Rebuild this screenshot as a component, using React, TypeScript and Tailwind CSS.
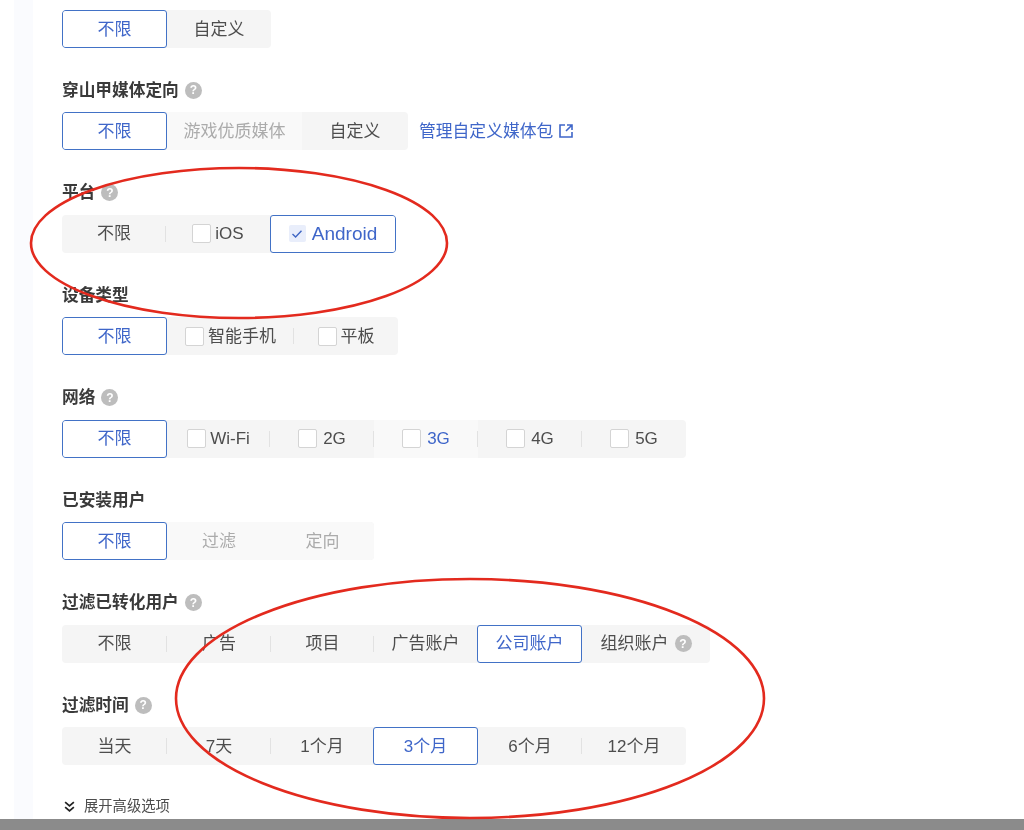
import React from "react";

type Item = {
  label: string;
  w: number;
  kind?: "selected" | "muted";
  check?: boolean;
  checked?: boolean;
  blue?: boolean;
  light?: boolean;
  divider?: boolean;
  help?: boolean;
  tight?: boolean;
  wide?: boolean;
};

function Help() {
  return (
    <span className="inline-flex h-[17px] w-[17px] items-center justify-center rounded-full bg-[#bdbdbd] text-[12px] font-bold leading-none text-white">
      ?
    </span>
  );
}

function Box({ checked }: { checked?: boolean }) {
  if (checked) {
    return (
      <span className="flex h-[17px] w-[17px] items-center justify-center rounded-[2px] bg-[#e9eefb]">
        <svg width="12" height="10" viewBox="0 0 12 10" fill="none" stroke="#3f66c4" strokeWidth="1.4">
          <path d="M1.5 5 L4.6 8 L10.5 1.8" />
        </svg>
      </span>
    );
  }
  return <span className="h-[19px] w-[19px] rounded-[2px] border border-[#d4d4d4] bg-white" />;
}

function Segment({ item }: { item: Item }) {
  const selected = item.kind === "selected";
  const tone = selected || item.blue ? "text-[#3f66c9]" : item.kind === "muted" ? "text-[#ababab]" : "text-[#4d4d4d]";
  const back = selected
    ? "bg-white border border-[#4272c6] rounded-[3px] z-10"
    : item.light
      ? "bg-[#f9f9f9]"
      : "";
  return (
    <div
      style={{ width: item.w }}
      className={`relative flex h-full shrink-0 items-center justify-center ${item.tight ? "gap-[4px]" : "gap-[6px]"} ${back} ${tone}`}
    >
      {item.check ? <Box checked={item.checked} /> : null}
      <span className={item.wide ? "text-[19px]" : ""}>{item.label}</span>
      {item.help ? <Help /> : null}
      {item.divider ? <span className="absolute right-0 top-[11px] h-[16px] w-px bg-[#e2e2e2]" /> : null}
    </div>
  );
}

function Group({ items }: { items: Item[] }) {
  return (
    <div className="flex h-[38px] w-fit overflow-hidden rounded-[4px] bg-[#f5f5f5] text-[17px] leading-none">
      {items.map((it) => (
        <Segment key={it.label} item={it} />
      ))}
    </div>
  );
}

function Row({ label, help, items, extra }: { label?: string; help?: boolean; items: Item[]; extra?: React.ReactNode }) {
  return (
    <div className="flex flex-col">
      {label ? (
        <div className="mb-[10px] flex h-[24px] items-center gap-[6px] text-[16.7px] font-bold text-[#3a3a3a]">
          <span>{label}</span>
          {help ? <Help /> : null}
        </div>
      ) : null}
      <div className="flex items-center gap-[11px]">
        <Group items={items} />
        {extra}
      </div>
    </div>
  );
}

const none: Item = { label: "不限", w: 105, kind: "selected" };

export default function App() {
  return (
    <div className="relative flex h-[830px] w-[1024px] flex-col overflow-hidden bg-white font-['Liberation_Sans','Noto_Sans_CJK_SC',sans-serif] blur-[0.4px]">
      <div className="flex min-h-0 flex-1">
        <div className="ml-[14px] w-[19px] bg-[#fafbfe]" />
        <div className="flex flex-1 flex-col gap-[30.45px] pl-[29px] pt-[10px]">
          <Row items={[none, { label: "自定义", w: 104 }]} />
          <Row
            label="穿山甲媒体定向"
            help
            items={[none, { label: "游戏优质媒体", w: 135, kind: "muted", light: true }, { label: "自定义", w: 106 }]}
            extra={
              <div className="flex items-center gap-[5px] text-[16.8px] text-[#3f66c9]">
                <span>管理自定义媒体包</span>
                <svg width="16" height="16" viewBox="0 0 16 16" fill="none" stroke="#3f66c9" strokeWidth="1.6">
                  <path d="M7 2 H2 V14 H14 V9" />
                  <path d="M9 2 H14 V7 M14 2 L8 8" />
                </svg>
              </div>
            }
          />
          <Row
            label="平台"
            help
            items={[
              { label: "不限", w: 104, divider: true },
              { label: "iOS", w: 104, check: true, tight: true },
              { label: "Android", w: 126, kind: "selected", check: true, checked: true, wide: true },
            ]}
          />
          <Row
            label="设备类型"
            items={[
              none,
              { label: "智能手机", w: 127, check: true, divider: true, tight: true },
              { label: "平板", w: 104, check: true, tight: true },
            ]}
          />
          <Row
            label="网络"
            help
            items={[
              none,
              { label: "Wi-Fi", w: 103, check: true, divider: true, tight: true },
              { label: "2G", w: 104, check: true, divider: true },
              { label: "3G", w: 104, check: true, blue: true, light: true, divider: true },
              { label: "4G", w: 104, check: true, divider: true },
              { label: "5G", w: 104, check: true },
            ]}
          />
          <Row
            label="已安装用户"
            items={[
              none,
              { label: "过滤", w: 104, kind: "muted", light: true },
              { label: "定向", w: 103, kind: "muted", light: true },
            ]}
          />
          <Row
            label="过滤已转化用户"
            help
            items={[
              { label: "不限", w: 105, divider: true },
              { label: "广告", w: 104, divider: true },
              { label: "项目", w: 103, divider: true },
              { label: "广告账户", w: 103 },
              { label: "公司账户", w: 105, kind: "selected" },
              { label: "组织账户", w: 128, help: true },
            ]}
          />
          <Row
            label="过滤时间"
            help
            items={[
              { label: "当天", w: 105, divider: true },
              { label: "7天", w: 104, divider: true },
              { label: "1个月", w: 102 },
              { label: "3个月", w: 105, kind: "selected" },
              { label: "6个月", w: 104, divider: true },
              { label: "12个月", w: 104 },
            ]}
          />
          <div className="mt-[3px] flex items-center gap-[7px] text-[14.3px] leading-none text-[#4d4d4d]">
            <svg width="15" height="15" viewBox="0 0 12 12" fill="none" stroke="#222" strokeWidth="1.4">
              <path d="M2.5 2.5 L6 5.5 L9.5 2.5 M2.5 6.5 L6 9.5 L9.5 6.5" />
            </svg>
            <span>展开高级选项</span>
          </div>
        </div>
      </div>
      <div className="relative z-10 h-[11px] shrink-0 bg-[#8b8b8b]" />
      <svg className="pointer-events-none absolute left-0 top-0 z-20" width="1024" height="830" viewBox="0 0 1024 830" fill="none" stroke="#e32a1e" strokeWidth="2.6">
        <ellipse cx="239" cy="243" rx="208" ry="75" />
        <ellipse cx="470" cy="698.5" rx="294" ry="119.5" />
      </svg>
    </div>
  );
}
